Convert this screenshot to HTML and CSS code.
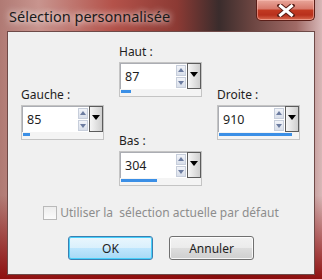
FILE: index.html
```html
<!DOCTYPE html>
<html lang="fr">
<head>
    <meta charset="UTF-8">
    <title>Sélection personnalisée</title>
    <link rel="stylesheet" href="styles.css">
</head>
<body>
    <div class="window">
        <!-- Barre de titre -->
        <div class="titlebar">
            <span class="title">Sélection personnalisée</span>
            <button class="close" aria-label="Fermer">
                <svg width="18" height="13" viewBox="0 0 18 13">
                    <path d="M3 1.5 L15 11.5 M15 1.5 L3 11.5" stroke="#5a1e16" stroke-width="5" stroke-linecap="square"/>
                    <path d="M3.5 2 L14.5 11 M14.5 2 L3.5 11" stroke="#fff" stroke-width="3" stroke-linecap="square"/>
                </svg>
            </button>
        </div>

        <div class="client">
            <div class="fields">
                <div class="col col-side">
                    <label class="lbl">Gauche :</label>
                    <div class="spin">
                        <div class="spin-top">
                            <div class="edit"><span>85</span>
                                <div class="arrows"><i class="up"></i><i class="down"></i></div>
                            </div>
                            <div class="drop"></div>
                        </div>
                        <div class="track"><div class="fill" style="width: 9%"></div></div>
                    </div>
                </div>

                <div class="col col-mid">
                    <label class="lbl">Haut :</label>
                    <div class="spin">
                        <div class="spin-top">
                            <div class="edit"><span>87</span>
                                <div class="arrows"><i class="up"></i><i class="down"></i></div>
                            </div>
                            <div class="drop"></div>
                        </div>
                        <div class="track"><div class="fill" style="width: 13%"></div></div>
                    </div>

                    <label class="lbl lbl-bas">Bas :</label>
                    <div class="spin">
                        <div class="spin-top">
                            <div class="edit"><span>304</span>
                                <div class="arrows"><i class="up"></i><i class="down"></i></div>
                            </div>
                            <div class="drop"></div>
                        </div>
                        <div class="track"><div class="fill" style="width: 45%"></div></div>
                    </div>
                </div>

                <div class="col col-side">
                    <label class="lbl">Droite :</label>
                    <div class="spin">
                        <div class="spin-top">
                            <div class="edit"><span>910</span>
                                <div class="arrows"><i class="up"></i><i class="down"></i></div>
                            </div>
                            <div class="drop"></div>
                        </div>
                        <div class="track"><div class="fill" style="width: 93%"></div></div>
                    </div>
                </div>
            </div>

            <div class="check-row">
                <span class="checkbox"></span>
                <span class="check-label">Utiliser la&nbsp; sélection actuelle par défaut</span>
            </div>

            <div class="buttons">
                <button class="btn btn-default">OK</button>
                <button class="btn">Annuler</button>
            </div>
        </div>
    </div>
</body>
</html>
```

FILE: styles.css
```css
/* Fenêtre style Aero */
body {
    margin: 0;
    font-family: "Noto Sans", "Open Sans", sans-serif;
    font-size: 12px;
    color: #1e1e1e;
}

.window {
    width: 322px;
    height: 279px;
    display: flex;
    flex-direction: column;
    background:
        linear-gradient(to bottom, rgba(140, 10, 10, 0) 70%, rgba(140, 10, 10, 0.95) 100%),
        linear-gradient(to right, #b07a74 0%, #c8948e 12%, #b4524a 35%, #8c3a34 55%, #3a2c2c 68%, #6a4440 78%, #a06a66 92%, #d8b8b8 100%);
    overflow: hidden;
}

.titlebar {
    height: 31px;
    display: flex;
    justify-content: space-between;
    align-items: flex-start;
    padding: 0 7px 0 9px;
}

.title {
    font-family: "Noto Sans", sans-serif;
    font-size: 14.5px;
    line-height: 20px;
    margin-top: 6px;
    color: #1a1a1a;
    text-shadow: 0 0 6px rgba(255, 255, 255, 0.9), 0 0 10px rgba(255, 255, 255, 0.6);
}

.close {
    width: 59px;
    height: 21px;
    margin-top: 0;
    padding: 0;
    border: 1px solid #5a1e18;
    border-top: none;
    border-radius: 0 0 5px 5px;
    background: linear-gradient(to bottom, #e8a69a 0%, #d7786a 45%, #c23a22 50%, #b8301c 75%, #d86a50 100%);
    box-shadow: inset 0 0 0 1px rgba(255, 200, 190, 0.5);
    display: flex;
    align-items: center;
    justify-content: center;
}

.client {
    flex: 1;
    margin: 0 7px 4px 7px;
    border: 1px solid #6e4a48;
    background: #f0f0f0;
    display: flex;
    flex-direction: column;
}

/* Champs */
.fields {
    display: flex;
    gap: 15px;
    padding: 12px 0 0 13px;
}

.col {
    width: 83px;
    display: flex;
    flex-direction: column;
}

.col-side {
    padding-top: 43px;
}

.lbl {
    line-height: 15px;
    height: 15px;
    margin-bottom: 3px;
}

.lbl-bas {
    margin-top: 36px;
}

.spin {
    border: 1px solid #c4c4c4;
    background: #fff;
}

.spin-top {
    display: flex;
    height: 26px;
}

.edit {
    flex: 1;
    display: flex;
    align-items: center;
    justify-content: space-between;
    padding-left: 4px;
    border: 1px solid #abadb3;
    border-right: none;
    border-bottom: none;
}

.edit span {
    font-size: 12.5px;
}

.arrows {
    width: 10px;
    height: 23px;
    margin-right: 1px;
    display: flex;
    flex-direction: column;
    gap: 1px;
}

.arrows i {
    flex: 1;
    position: relative;
    background: linear-gradient(to bottom, #f2f4f9, #d9dfea);
    border: 1px solid #c7cedb;
}

.arrows i::after {
    content: "";
    position: absolute;
    left: 1px;
    border-left: 3px solid transparent;
    border-right: 3px solid transparent;
}

.arrows .up::after {
    top: 2px;
    border-bottom: 4px solid #6c7ca0;
}

.arrows .down::after {
    top: 3px;
    border-top: 4px solid #6c7ca0;
}

.drop {
    width: 12px;
    border: 1px solid #5c5c5c;
    background: linear-gradient(to right, #f6f6f6, #cfcfcf);
    position: relative;
}

.drop::after {
    content: "";
    position: absolute;
    left: 2px;
    top: 8px;
    border-left: 4px solid transparent;
    border-right: 4px solid transparent;
    border-top: 5px solid #000;
}

.track {
    height: 5px;
    padding: 1px 1px 1px 1px;
    background: #f4f4f4;
}

.fill {
    height: 3px;
    background: #3b8fe6;
}

/* Case à cocher */
.check-row {
    display: flex;
    align-items: center;
    justify-content: center;
    gap: 3px;
    margin-top: 18px;
}

.checkbox {
    width: 12px;
    height: 12px;
    border: 1px solid #b9b9b9;
    background: linear-gradient(to bottom, #ededed, #fbfbfb);
}

.check-label {
    color: #8d8d8d;
}

/* Boutons */
.buttons {
    display: flex;
    justify-content: center;
    gap: 16px;
    margin-top: 15px;
}

.btn {
    width: 85px;
    height: 24px;
    font-family: inherit;
    font-size: 12px;
    color: #1e1e1e;
    border: 1px solid #707070;
    border-radius: 3px;
    background: linear-gradient(to bottom, #f2f2f2 0%, #ebebeb 50%, #dddddd 51%, #cfcfcf 100%);
    box-shadow: inset 0 0 0 1px rgba(255, 255, 255, 0.8);
}

.btn-default {
    border-color: #3c7fb1;
    background: linear-gradient(to bottom, #eaf6fd 0%, #d9f0fc 50%, #bee6fd 51%, #a7d9f5 100%);
    box-shadow: inset 0 0 0 1px #48d0fb;
}
```
